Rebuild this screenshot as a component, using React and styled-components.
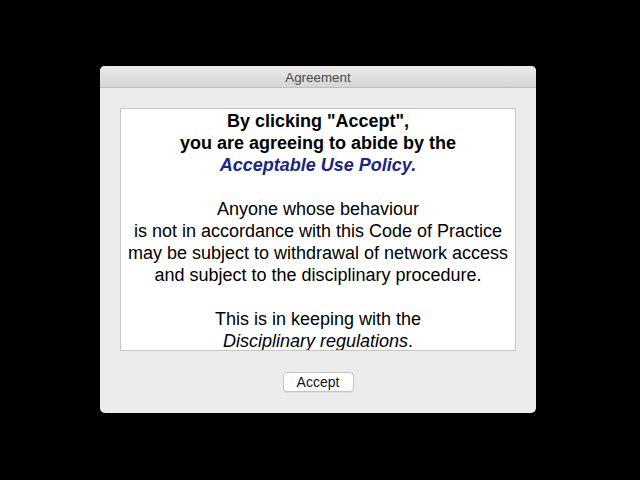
import React from 'react';
import styled, { createGlobalStyle } from 'styled-components';

const Global = createGlobalStyle`
  html, body {
    margin: 0;
    padding: 0;
    background: #000;
  }
  body {
    font-family: "Liberation Sans", Arial, sans-serif;
  }
`

const Screen = styled.div`
  width: 640px;
  height: 480px;
  background: #000;
  padding: 66px 0 0 100px;
  box-sizing: border-box;
`

const Window = styled.div`
  width: 436px;
  height: 347px;
  background: #ececec;
  border-radius: 5px;
  overflow: hidden;
  display: flex;
  flex-direction: column;
`

const TitleBar = styled.div`
  height: 22px;
  background: linear-gradient(#ebebeb, #d5d5d5);
  border-bottom: 1px solid #bdbdbd;
  box-sizing: border-box;
  display: flex;
  align-items: center;
  justify-content: center;
  font-size: 13.4px;
  color: #4a4a4a;
  padding-top: 1px;
`

const Body = styled.div`
  flex: 1;
  display: flex;
  flex-direction: column;
  align-items: center;
  padding: 20px 20px 0 20px;
`

const Panel = styled.div`
  width: 396px;
  height: 243px;
  box-sizing: border-box;
  background: #fff;
  border: 1px solid #c6c6c6;
  overflow: hidden;
  text-align: center;
  font-size: 18px;
  line-height: 22px;
  padding-top: 1px;
  color: #000;
`

const Para = styled.p`
  margin: 0 0 22px 0;
  font-weight: ${p => (p.bold ? 'bold' : 'normal')};
`

const Link = styled.em`
  color: ${p => p.color || '#000'};
`

const Button = styled.button`
  margin-top: 21px;
  width: 71px;
  height: 20px;
  background: #fff;
  border: 1px solid #c4c4c4;
  border-radius: 4px;
  font-family: "Liberation Sans", Arial, sans-serif;
  font-size: 14px;
  color: #111;
  padding: 0;
  box-shadow: 0 1px 0 rgba(0,0,0,0.06);
`

export default function App() {
  return (
    <>
      <Global />
      <Screen>
        <Window>
          <TitleBar>Agreement</TitleBar>
          <Body>
            <Panel>
              <Para bold>
                By clicking "Accept",<br />
                you are agreeing to abide by the<br />
                <Link color="#1c2580">Acceptable Use Policy.</Link>
              </Para>
              <Para>
                Anyone whose behaviour<br />
                is not in accordance with this Code of Practice<br />
                may be subject to withdrawal of network access<br />
                and subject to the disciplinary procedure.
              </Para>
              <Para>
                This is in keeping with the<br />
                <Link>Disciplinary regulations</Link>.
              </Para>
            </Panel>
            <Button>Accept</Button>
          </Body>
        </Window>
      </Screen>
    </>
  );
}
